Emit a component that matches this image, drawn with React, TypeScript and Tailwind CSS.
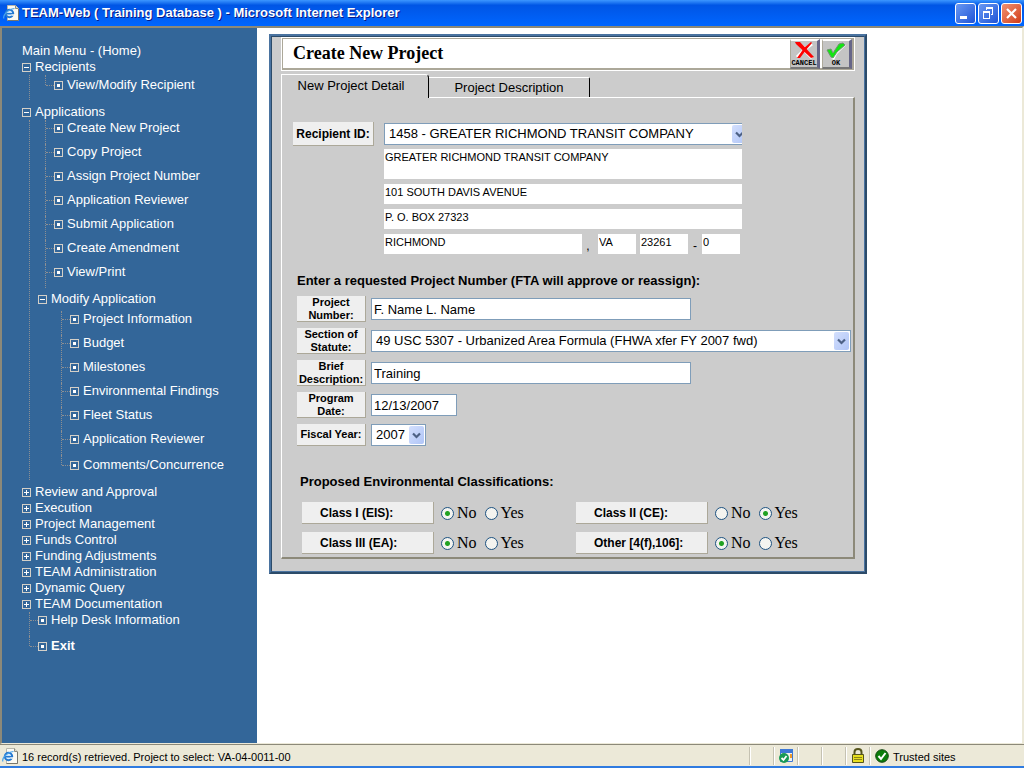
import { useState } from "react"
import type { ReactNode } from "react"

type Option = "No" | "Yes"

const applicationItems = [
  "Create New Project",
  "Copy Project",
  "Assign Project Number",
  "Application Reviewer",
  "Submit Application",
  "Create Amendment",
  "View/Print",
]

const modifyItems = [
  "Project Information",
  "Budget",
  "Milestones",
  "Environmental Findings",
  "Fleet Status",
  "Application Reviewer",
]

const closedFolders = [
  "Review and Approval",
  "Execution",
  "Project Management",
  "Funds Control",
  "Funding Adjustments",
  "TEAM Administration",
  "Dynamic Query",
  "TEAM Documentation",
]

const classifications: { id: string; label: string; value: Option }[] = [
  { id: "eis", label: "Class I (EIS):", value: "No" },
  { id: "ce", label: "Class II (CE):", value: "Yes" },
  { id: "ea", label: "Class III (EA):", value: "No" },
  { id: "other", label: "Other [4(f),106]:", value: "No" },
]

function IePageIcon() {
  return (
    <svg className="h-4 w-4 shrink-0" viewBox="0 0 16 16">
      <path d="M4.500.5h8l3 3v12h-11z" fill="#fbfaf3" stroke="#b9b8ac" />
      <path d="M12.500.5v3h3" fill="#dcdacb" stroke="#8d8c80" />
      <path d="M15.500 4v11.500h-11" fill="none" stroke="#77766c" />
      <circle cx="6.500" cy="8.500" r="3.700" fill="#d9efff" stroke="#2378d0" strokeWidth="2" />
      <path d="M3.500 8.700h7" stroke="#2378d0" strokeWidth="1.600" />
      <path d="M8.500 10h3" stroke="#fbfaf3" strokeWidth="1.500" />
      <path d="M1 13.500C-.5 11 4 4.500 11.500 3.500" fill="none" stroke="#4aa3ea" strokeWidth="1.200" />
    </svg>
  )
}

function FolderIcon({ open }: { open?: boolean }) {
  return (
    <svg className="mt-px h-[9px] w-[9px] shrink-0" viewBox="0 0 9 9" shapeRendering="crispEdges">
      <path d="M.5.5h8v8h-8z" fill="none" stroke="#d4d0c8" />
      <path d={open ? "M2 4.500h5" : "M2 4.500h5M4.500 2v5"} stroke="#ffffff" />
    </svg>
  )
}

function LeafIcon() {
  return (
    <svg className="mt-1 h-[9px] w-[9px] shrink-0" viewBox="0 0 9 9" shapeRendering="crispEdges">
      <path d="M.5.5h8v8h-8z" fill="none" stroke="#d4d0c8" />
      <path d="M3 3h3v3h-3z" fill="#ffffff" />
    </svg>
  )
}

function Folder({ label, open }: { label: string; open?: boolean }) {
  return (
    <a href="#" className="flex h-4 items-center gap-1">
      <FolderIcon open={open} />
      {label}
    </a>
  )
}

function Leaf({ label, last, bold }: { label: string; last?: boolean; bold?: boolean }) {
  return (
    <li className={last ? "flex h-[18px] items-start" : "flex h-6 items-start"}>
      <span className={`w-px shrink-0 border-l border-dotted border-[#8d8f92] ${last ? "h-[10px]" : "h-full"}`} />
      <span className={`h-px w-2 shrink-0 border-t border-dotted border-[#8d8f92] ${last ? "mt-[10px]" : "mt-2"}`} />
      <a href="#" className={`flex h-4 gap-1 ${last ? "mt-0.5" : ""} ${bold ? "font-bold" : ""}`}>
        <LeafIcon />
        {label}
      </a>
    </li>
  )
}

function Sidebar() {
  return (
    <nav className="w-[255px] shrink-0 bg-[#336699] pt-[15px] pl-5 text-[13px] leading-4 text-white">
      <a href="#" className="block">Main Menu - (Home)</a>
      <Folder label="Recipients" open />
      <ul className="mb-1 ml-[7px] border-l border-dotted border-[#8d8f92] pb-[7px] pl-[15px]">
        <Leaf label="View/Modify Recipient" last />
      </ul>
      <Folder label="Applications" open />
      <ul className="mb-1 ml-[7px] border-l border-dotted border-[#8d8f92] pb-[7px]">
        <li>
          <ul className="pl-[15px]">
            {applicationItems.map((item) => (
              <Leaf key={item} label={item} />
            ))}
          </ul>
        </li>
        <li className="pt-[3px]">
          <div className="pl-2">
            <Folder label="Modify Application" open />
          </div>
          <ul className="pt-1 pl-[31px]">
            {modifyItems.map((item) => (
              <Leaf key={item} label={item} />
            ))}
            <Leaf label="Comments/Concurrence" last />
          </ul>
        </li>
      </ul>
      {closedFolders.map((item) => (
        <Folder key={item} label={item} />
      ))}
      <ul className="pl-[7px]">
        <Leaf label="Help Desk Information" />
        <Leaf label="Exit" last bold />
      </ul>
    </nav>
  )
}

function TitleBar() {
  const button = "flex h-[21px] w-[21px] items-center justify-center rounded-[3px] border border-white"
  return (
    <header className="flex h-[26px] shrink-0 items-center bg-linear-to-b from-[#3c96ff] via-[#0055e5] via-20% to-[#0066ff] pr-0.5 pl-[3px]">
      <IePageIcon />
      <h1 className="ml-[3px] flex-1 font-['Liberation_Sans'] text-[13px] font-bold whitespace-nowrap text-white [text-shadow:1px_1px_0_#0a1883]">
        TEAM-Web ( Training Database ) - Microsoft Internet Explorer
      </h1>
      <div className="flex gap-0.5">
        <button aria-label="Minimize" className={`${button} bg-linear-to-br from-[#6a98f2] to-[#1f52d6]`}>
          <svg className="h-[19px] w-[19px]" viewBox="0 0 19 19">
            <path d="M4 12h7v3H4z" fill="#fff" />
          </svg>
        </button>
        <button aria-label="Restore" className={`${button} bg-linear-to-br from-[#6a98f2] to-[#1f52d6]`}>
          <svg className="h-[19px] w-[19px]" viewBox="0 0 19 19" fill="none" stroke="#fff" shapeRendering="crispEdges">
            <path d="M4.500 8.500h6v6h-6zM4 7.500h7M7.500 6V4.500h6v6H12M7 3.500h7" />
          </svg>
        </button>
        <button aria-label="Close" className={`${button} bg-linear-to-br from-[#f0906f] to-[#d13a12]`}>
          <svg className="h-[19px] w-[19px]" viewBox="0 0 19 19">
            <path d="M5 5l9 9M14 5l-9 9" stroke="#fff" strokeWidth="2.200" />
          </svg>
        </button>
      </div>
    </header>
  )
}

function LabelBox({ htmlFor, className, children }: { htmlFor?: string; className: string; children: ReactNode }) {
  return (
    <label
      htmlFor={htmlFor}
      className={`flex shrink-0 items-center border-r border-b border-[#aca899] bg-[#efefef] font-bold ${className}`}
    >
      {children}
    </label>
  )
}

function SelectBox({ id, value, className }: { id: string; value: string; className: string }) {
  return (
    <div className={`relative h-[22px] ${className}`}>
      <select
        id={id}
        className="block h-full w-full appearance-none border border-[#7f9db9] bg-white pl-1 text-[13px] outline-none"
      >
        <option>{value}</option>
      </select>
      <span className="pointer-events-none absolute top-0.5 right-0.5 flex h-[18px] w-[15px] items-center justify-center rounded-xs bg-linear-to-br from-[#d3dffd] to-[#b0c5f7]">
        <svg className="h-[7px] w-[9px]" viewBox="0 0 9 7">
          <path d="M1 1.500l3.500 3.500L8 1.500" fill="none" stroke="#4d6185" strokeWidth="2.200" />
        </svg>
      </span>
    </div>
  )
}

function ReadOnlyBox({ label, value, className }: { label: string; value: string; className: string }) {
  return (
    <input
      aria-label={label}
      readOnly
      defaultValue={value}
      className={`block h-5 bg-white pb-1 pl-px text-[11px] outline-none ${className}`}
    />
  )
}

const textBox = "h-[22px] border border-[#7f9db9] bg-white px-0.5 text-[13px] outline-none"
const fieldLabel = "h-[26px] w-[69px] justify-center text-center text-[11px] leading-[13px]"

function ClassificationRow({ id, label, value }: { id: string; label: string; value: Option }) {
  const [selected, setSelected] = useState<Option>(value)
  return (
    <div role="radiogroup" aria-label={label} className="flex h-[22px] items-center">
      <span className="flex h-[22px] w-[132px] items-center border-r border-b border-[#aca899] bg-[#efefef] pl-[18px] text-[12px] font-bold">
        {label}
      </span>
      <div className="ml-[7px] flex gap-2 font-['Liberation_Serif'] text-[16px] leading-5">
        {(["No", "Yes"] as Option[]).map((option) => (
          <label key={option} className="flex items-center gap-[3px]">
            <input
              type="radio"
              name={id}
              checked={selected === option}
              onChange={() => setSelected(option)}
              className="h-[13px] w-[13px] appearance-none rounded-full border border-[#1d5281] bg-[#f4f4f0] checked:bg-[radial-gradient(circle,#21a121_0_2px,#f4f4f0_3px)]"
            />
            {option}
          </label>
        ))}
      </div>
    </div>
  )
}

function ProjectForm() {
  return (
    <form className="border-t border-r-2 border-b-2 border-l border-t-white border-r-[#8c8979] border-b-[#8c8979] border-l-white pb-[3px]">
      <div className="flex gap-[10px] pt-6 pl-[11px]">
        <LabelBox htmlFor="recipient" className="h-6 w-[81px] justify-center text-[12px]">
          Recipient ID:
        </LabelBox>
        <div className="w-[358px] pt-px">
          <div className="overflow-hidden">
            <SelectBox id="recipient" value="1458 - GREATER RICHMOND TRANSIT COMPANY" className="w-[365px]" />
          </div>
          <div className="mt-1 flex flex-col gap-[5px]">
            <textarea
              aria-label="Recipient name"
              readOnly
              defaultValue="GREATER RICHMOND TRANSIT COMPANY"
              className="block h-[30px] w-full resize-none overflow-hidden bg-white pl-px text-[11px] leading-4 outline-none"
            />
            <ReadOnlyBox label="Address line 1" value="101 SOUTH DAVIS AVENUE" className="w-full" />
            <ReadOnlyBox label="Address line 2" value="P. O. BOX 27323" className="w-full" />
            <div className="flex items-end text-[12px] leading-4">
              <ReadOnlyBox label="City" value="RICHMOND" className="w-[198px]" />
              <span className="w-4 pr-1 text-center">,</span>
              <ReadOnlyBox label="State" value="VA" className="w-[38px]" />
              <ReadOnlyBox label="Zip" value="23261" className="ml-1 w-12" />
              <span className="w-[14px] text-center">-</span>
              <ReadOnlyBox label="Zip extension" value="0" className="w-[38px]" />
            </div>
          </div>
        </div>
      </div>

      <div className="pr-[2px] pl-[15px]">
        <h3 className="mt-[19px] text-[13px] leading-4 font-bold">
          Enter a requested Project Number (FTA will approve or reassign):
        </h3>
        <div className="mt-[7px] flex flex-col gap-[6px]">
          <div className="flex items-center gap-[5px]">
            <LabelBox htmlFor="number" className={fieldLabel}>Project Number:</LabelBox>
            <input id="number" defaultValue="F. Name L. Name" className={`${textBox} w-[320px]`} />
          </div>
          <div className="flex items-center gap-[5px]">
            <LabelBox htmlFor="statute" className={fieldLabel}>Section of Statute:</LabelBox>
            <SelectBox
              id="statute"
              value="49 USC 5307 - Urbanized Area Formula (FHWA xfer FY 2007 fwd)"
              className="flex-1"
            />
          </div>
          <div className="flex items-center gap-[5px]">
            <LabelBox htmlFor="description" className={fieldLabel}>Brief Description:</LabelBox>
            <input id="description" defaultValue="Training" className={`${textBox} w-[320px]`} />
          </div>
          <div className="flex items-center gap-[5px]">
            <LabelBox htmlFor="date" className={fieldLabel}>Program Date:</LabelBox>
            <input id="date" defaultValue="12/13/2007" className={`${textBox} w-[86px]`} />
          </div>
          <div className="flex items-center gap-[5px]">
            <LabelBox htmlFor="year" className="h-[22px] w-[69px] justify-center text-[11px] whitespace-nowrap">
              Fiscal Year:
            </LabelBox>
            <SelectBox id="year" value="2007" className="w-[55px]" />
          </div>
        </div>
      </div>

      <h3 className="mt-7 pl-[18px] text-[13px] leading-4 font-bold">Proposed Environmental Classifications:</h3>
      <div className="mt-3 grid grid-cols-[274px_1fr] gap-y-2 pl-5">
        {classifications.map((item) => (
          <ClassificationRow key={item.id} {...item} />
        ))}
      </div>
    </form>
  )
}

function ImageButton({ label, children }: { label: string; children: ReactNode }) {
  return (
    <button
      aria-label={label}
      className="flex h-[30px] w-[30px] flex-col items-center overflow-hidden border-t-2 border-r-[3px] border-b-2 border-l border-t-white border-r-[#666688] border-b-[#777777] border-l-[#aca899] bg-[#c4c4c4]"
    >
      {children}
      <span className="font-['Liberation_Mono'] text-[7px] leading-[7px] font-bold">{label}</span>
    </button>
  )
}

function ProjectPanel() {
  return (
    <section className="w-full max-w-[598px] border-2 border-t-[#4a73a0] border-r-[#2c4b69] border-b-[#2c4b69] border-l-[#4a73a0]">
      <div className="border border-t-[#2c4b69] border-r-[#4a73a0] border-b-[#4a73a0] border-l-[#2c4b69] bg-[#cccccc] px-[9px] pb-3">
        <div className="border border-white">
          <div className="flex h-8 items-center border-t border-r-2 border-b-2 border-l border-[#aca899] bg-white pl-[10px]">
            <h2 className="flex-1 font-['Liberation_Serif'] text-[18px] font-bold">Create New Project</h2>
            <div className="flex gap-0.5">
              <ImageButton label="CANCEL">
                <svg className="h-[19px] w-[22px] shrink-0" viewBox="0 0 22 19">
                  <path d="M5 2l7 6 7-5M12 10l7 7M10 10l-6 6" stroke="#fff" strokeWidth="3" fill="none" />
                  <path d="M2 1h5l14 15-3 1L3 3z" fill="#f00" />
                  <path d="M18 1l-7 6-7 10h3l6-8 6-7z" fill="#f00" />
                </svg>
              </ImageButton>
              <ImageButton label="OK">
                <svg className="h-[19px] w-[22px] shrink-0" viewBox="0 0 22 19">
                  <path d="M4 11l4-1 2 3 5-8 6-1-9 9-3 6-2-1z" fill="#fff" />
                  <path d="M2 9l4-1 2 4 6-9 4-1 2 2-8 7-4 6-2-1z" fill="#12e612" stroke="#6f936f" />
                </svg>
              </ImageButton>
            </div>
          </div>
        </div>
        <div role="tablist" className="mt-[3px] flex h-[23px] items-end text-[13px] leading-4">
          <button
            role="tab"
            aria-selected="true"
            className="relative z-10 -mb-px h-6 w-[148px] rounded-tr-sm border-t border-r border-l border-t-white border-r-black border-l-white bg-[#cccccc] pr-2 pb-0.5"
          >
            New Project Detail
          </button>
          <button
            role="tab"
            aria-selected="false"
            className="h-5 w-[161px] rounded-tr-xs border-t border-r border-t-white border-r-black"
          >
            Project Description
          </button>
        </div>
        <ProjectForm />
      </div>
    </section>
  )
}

function StatusBar() {
  const cell = "flex h-[18px] w-6 items-center justify-center border-l border-[#c5c2b2] shadow-[inset_1px_0_0_#fff]"
  return (
    <footer className="flex h-6 shrink-0 items-center border-t border-b-2 border-t-[#8c8979] border-b-[#2f7be0] bg-[#ece9d8] pl-0.5 text-[11px]">
      <IePageIcon />
      <p className="ml-1 flex-1 pt-1">16 record(s) retrieved. Project to select: VA-04-0011-00</p>
      <div className="flex items-center">
        <span className={cell} />
        <span className={cell}>
          <svg className="h-4 w-4" viewBox="0 0 16 16">
            <path d="M2.500 1.500h12v12h-12z" fill="#f3f3ee" stroke="#3d78d6" />
            <path d="M2 1h13v4H2z" fill="#3d78d6" />
            <path d="M12 6h2v4h-2z" fill="#f09a2c" />
            <circle cx="6" cy="10" r="5" fill="#189a55" />
            <path d="M3.500 10l2 2 3-4" fill="none" stroke="#fff" strokeWidth="1.800" />
          </svg>
        </span>
        <span className={cell} />
        <span className={cell} />
        <span className={cell}>
          <svg className="h-4 w-[14px]" viewBox="0 0 14 16">
            <path d="M3.500 7V4c0-4 7-4 7 0v3" fill="none" stroke="#55551c" strokeWidth="2" />
            <path d="M1.500 6.500h11v8h-11z" fill="#e8e020" stroke="#55551c" />
            <path d="M3 9.500h8M3 11.500h8" stroke="#8b8618" />
          </svg>
        </span>
        <span className="flex h-[18px] w-[155px] items-center gap-1 border-l border-[#c5c2b2] pl-[5px] shadow-[inset_1px_0_0_#fff]">
          <svg className="h-[14px] w-[14px]" viewBox="0 0 14 14">
            <circle cx="7" cy="7" r="6.300" fill="#0b7d0b" stroke="#124812" />
            <path d="M3.500 7l2.500 3 4.500-6" fill="none" stroke="#fff" strokeWidth="2" />
          </svg>
          <span className="pt-1">Trusted sites</span>
        </span>
      </div>
    </footer>
  )
}

export default function App() {
  return (
    <div className="flex min-h-screen flex-col bg-[#ece9d8] font-['Liberation_Sans',Arial,sans-serif] text-black">
      <TitleBar />
      <div className="flex flex-1 border-t-2 border-r-2 border-b border-l-2 border-t-[#8c8979] border-r-[#ece9d8] border-b-[#ece9d8] border-l-[#8c8979] bg-white">
        <Sidebar />
        <main className="flex-1 pt-[6px] pl-3">
          <ProjectPanel />
        </main>
      </div>
      <StatusBar />
    </div>
  )
}
